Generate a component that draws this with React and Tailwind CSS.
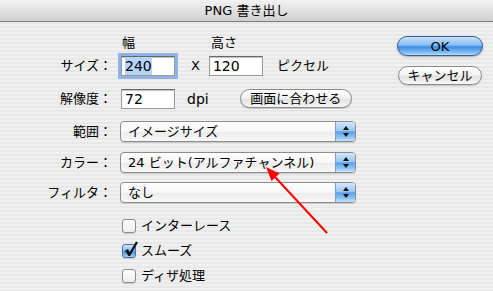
import React from 'react';

const Field = ({ value, focused }) => (
  <div
    className={`flex h-[20px] w-[54px] items-center border border-[#9a9a9a] border-t-[#666] bg-white pl-[3px] text-[14px] leading-none text-black ${
      focused
        ? 'shadow-[0_0_0_3px_#8fb3e2,inset_0_1px_1px_rgba(0,0,0,0.25)]'
        : 'shadow-[inset_0_1px_1px_rgba(0,0,0,0.25)]'
    }`}
  >
    {focused ? <span className="bg-[#b5d3fb] py-[2px]">{value}</span> : value}
  </div>
);

const Pill = ({ label, className }) => (
  <div
    className={`flex items-center justify-center rounded-full border border-[#8a8a8a] bg-[linear-gradient(to_bottom,#ffffff_0%,#f3f3f3_45%,#e2e2e2_55%,#f6f6f6_100%)] text-[13px] leading-none text-black shadow-[0_1px_1px_rgba(0,0,0,0.18)] ${className}`}
  >
    {label}
  </div>
);

const Popup = ({ label }) => (
  <div className="flex h-[21px] w-[236px] overflow-hidden rounded-[4px] border border-[#8c8c8c] bg-[linear-gradient(to_bottom,#ffffff_0%,#f7f7f7_50%,#ececec_55%,#f8f8f8_100%)] shadow-[0_1px_1px_rgba(0,0,0,0.15)]">
    <div className="flex flex-1 items-center pl-[7px] text-[13px] leading-none text-black">{label}</div>
    <div className="flex w-[20px] flex-col items-center justify-center gap-[3px] border-l border-[#7f9cc4] bg-[linear-gradient(to_bottom,#d3e7fb_0%,#9cc8f3_45%,#5c9fe8_52%,#8ec4f5_80%,#c7e3fb_100%)]">
      <svg width="6" height="4" viewBox="0 0 6 4"><path d="M3 0L6 4H0z" fill="#111" /></svg>
      <svg width="6" height="4" viewBox="0 0 6 4"><path d="M0 0h6L3 4z" fill="#111" /></svg>
    </div>
  </div>
);

const CheckRow = ({ label, checked }) => (
  <div className="flex h-[25px] items-center">
    <div
      className={`relative h-[14px] w-[14px] rounded-[3px] border ${
        checked
          ? 'border-[#4a6fa8] bg-[linear-gradient(to_bottom,#cfe4fb_0%,#8cc0f2_45%,#4d94e4_55%,#9fd0f8_100%)]'
          : 'border-[#8c8c8c] bg-[linear-gradient(to_bottom,#ffffff,#ededed)]'
      } shadow-[0_1px_1px_rgba(0,0,0,0.15)]`}
    >
      {checked && (
        <svg className="absolute -top-[5px] left-[0px]" width="16" height="18" viewBox="0 0 16 18">
          <path d="M2 10.5 L5 9 L6.5 12.5 L13 1.5 L15 2.5 L7 16 L5.5 16 Z" fill="#111" />
        </svg>
      )}
    </div>
    <span className="ml-[5px] text-[13px] leading-none text-black">{label}</span>
  </div>
);

const Label = ({ children }) => (
  <div className="w-[113px] pr-[1px] text-right text-[13px] leading-none text-black">{children}</div>
);

export default function App() {
  return (
    <div className="relative h-[291px] w-[493px] overflow-hidden bg-[image:repeating-linear-gradient(to_bottom,#f0f0f0_0px,#f0f0f0_2px,#e8e8e8_2px,#e8e8e8_4px)] font-['DejaVu_Sans','Noto_Sans_CJK_JP',sans-serif] text-black">
      <div className="flex h-[22px] items-center justify-center border-b border-[#7c7c7c] bg-[linear-gradient(to_bottom,#f2f2f2,#d0d0d0)] text-[13px] leading-none">
        PNG 書き出し
      </div>

      <div className="flex">
        <div className="w-[397px]">
          <div className="mt-[12px] flex h-[17px] items-center text-[13px] leading-none">
            <div className="ml-[122px]">幅</div>
            <div className="ml-[76px]">高さ</div>
          </div>

          <div className="mt-[4px] flex h-[21px] items-center">
            <Label>サイズ：</Label>
            <div className="ml-[8px]"><Field value="240" focused /></div>
            <div className="ml-[16px] text-[13px] leading-none">X</div>
            <div className="ml-[9px]"><Field value="120" /></div>
            <div className="ml-[14px] text-[13px] leading-none">ピクセル</div>
          </div>

          <div className="mt-[12px] flex h-[21px] items-center">
            <Label>解像度：</Label>
            <div className="ml-[8px]"><Field value="72" /></div>
            <div className="ml-[12px] text-[14px] leading-none">dpi</div>
            <Pill label="画面に合わせる" className="ml-[31px] h-[19px] w-[112px]" />
          </div>

          <div className="mt-[12px] flex h-[21px] items-center">
            <Label>範囲：</Label>
            <div className="ml-[7px]"><Popup label="イメージサイズ" /></div>
          </div>
          <div className="mt-[10px] flex h-[21px] items-center">
            <Label>カラー：</Label>
            <div className="ml-[7px]"><Popup label="24 ビット(アルファチャンネル)" /></div>
          </div>
          <div className="mt-[9px] flex h-[21px] items-center">
            <Label>フィルタ：</Label>
            <div className="ml-[7px]"><Popup label="なし" /></div>
          </div>

          <div className="ml-[122px] mt-[10px] flex flex-col">
            <CheckRow label="インターレース" />
            <CheckRow label="スムーズ" checked />
            <CheckRow label="ディザ処理" />
          </div>
        </div>

        <div className="flex flex-col items-start pt-[14px]">
          <div className="flex h-[20px] w-[86px] items-center justify-center rounded-full border border-[#3b5f9c] bg-[linear-gradient(to_bottom,#c9e2fb_0%,#86bdf2_45%,#3f8ce4_55%,#7dbdf6_85%,#b8defc_100%)] text-[13px] leading-none text-black shadow-[0_1px_2px_rgba(0,0,0,0.3)]">
            OK
          </div>
          <Pill label="キャンセル" className="ml-[1px] mt-[10px] h-[19px] w-[84px]" />
        </div>
      </div>

      <svg className="pointer-events-none absolute left-0 top-0" width="493" height="291" viewBox="0 0 493 291">
        <line x1="327" y1="233" x2="275" y2="177" stroke="#f00" strokeWidth="2" />
        <path d="M266 167 L279.5 173.5 L271.5 181 Z" fill="#f00" />
      </svg>
    </div>
  );
}
